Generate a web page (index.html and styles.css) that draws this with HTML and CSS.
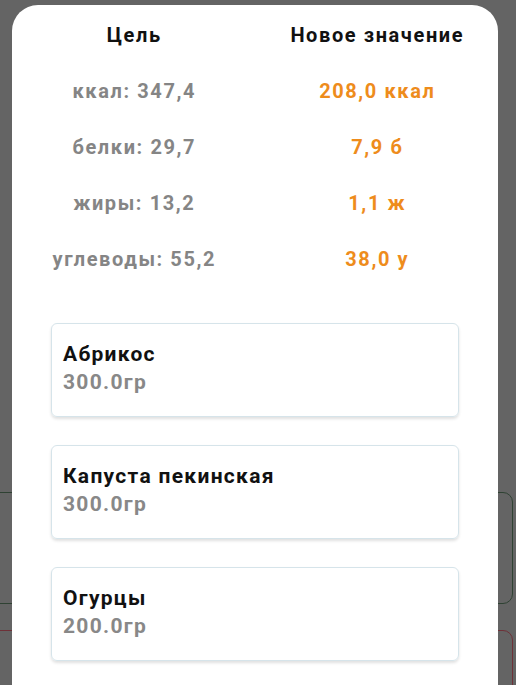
FILE: index.html
```html
<!DOCTYPE html>
<html lang="ru">
<head>
<meta charset="utf-8">
<link rel="stylesheet" href="styles.css">
</head>
<body>
<div class="backdrop">
  <div class="bg-card bg-green"></div>
  <div class="bg-card bg-red"></div>
</div>
<div class="modal">
  <div class="table">
    <div class="cell head">Цель</div>
    <div class="cell head">Новое значение</div>
    <div class="cell goal">ккал: 347,4</div>
    <div class="cell val">208,0 ккал</div>
    <div class="cell goal">белки: 29,7</div>
    <div class="cell val">7,9 б</div>
    <div class="cell goal">жиры: 13,2</div>
    <div class="cell val">1,1 ж</div>
    <div class="cell goal">углеводы: 55,2</div>
    <div class="cell val">38,0 у</div>
  </div>
  <div class="list">
    <div class="item">
      <div class="name">Абрикос</div>
      <div class="weight">300.0гр</div>
    </div>
    <div class="item">
      <div class="name">Капуста пекинская</div>
      <div class="weight">300.0гр</div>
    </div>
    <div class="item">
      <div class="name">Огурцы</div>
      <div class="weight">200.0гр</div>
    </div>
  </div>
</div>
</body>
</html>
```

FILE: styles.css
```css
html, body {
  margin: 0;
  padding: 0;
  height: 100%;
  overflow: hidden;
}
body {
  background: #646464;
  font-family: Roboto, "Liberation Sans", sans-serif;
  position: relative;
}
.backdrop {
  position: absolute;
  inset: 0;
}
.bg-card {
  position: absolute;
  left: -20px;
  right: 3px;
  border: 1.5px solid #2f4233;
  border-radius: 10px;
}
.bg-green {
  top: 492px;
  height: 110px;
}
.bg-red {
  top: 630px;
  height: 120px;
  border-color: #6e3138;
}
.modal {
  position: relative;
  margin: 5px 18px 0 12px;
  background: #fff;
  border-radius: 26px 26px 0 0;
  padding-top: 2px;
  height: 700px;
}
.table {
  display: grid;
  grid-template-columns: 1fr 1fr;
  grid-auto-rows: 56px;
}
.cell {
  display: flex;
  align-items: center;
  justify-content: center;
  font-weight: 700;
  font-size: 20px;
  letter-spacing: 1.6px;
  padding-left: 1.6px;
}
.head {
  color: #111;
}
.goal {
  color: #858585;
}
.val {
  color: #ee8c1c;
}
.list {
  display: flex;
  flex-direction: column;
  gap: 28px;
  margin: 36px 39px 0;
}
.item {
  height: 94px;
  box-sizing: border-box;
  border: 1px solid #d6e4ea;
  border-radius: 6px;
  box-shadow: 0 2px 3px rgba(0, 0, 0, 0.12);
  padding: 16px 11px 0;
}
.name {
  font-size: 21px;
  font-weight: 700;
  color: #111;
  line-height: 28px;
  letter-spacing: 1.3px;
}
.weight {
  font-size: 21px;
  font-weight: 700;
  color: #888;
  line-height: 28px;
  letter-spacing: 1.3px;
}
```
